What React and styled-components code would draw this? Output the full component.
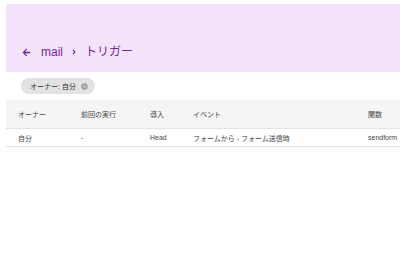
import React from 'react'
import styled, { createGlobalStyle } from 'styled-components'

const GlobalStyle = createGlobalStyle`
  body {
    margin: 0;
    background: #ffffff;
    font-family: "Liberation Sans", "Noto Sans CJK JP", sans-serif;
    overflow: hidden;
  }
`

const StyledPage = styled.div`
  width: 394px;
  padding: 4px 0 0 6px;
  overflow: hidden;
`

const StyledHeader = styled.header`
  height: 68px;
  background-color: #f3e4fc;
  display: flex;
  align-items: flex-end;
  padding: 0 0 13px 15px;
  box-sizing: border-box;
`

const StyledCrumbs = styled.nav`
  display: flex;
  align-items: center;
  gap: 7px;
  color: #7b1fa2;
  font-size: 12px;
  line-height: 14px;
`

const StyledIconButton = styled.span`
  display: flex;
  align-items: center;
  color: #6a1b9a;
  margin-right: ${p => (p.$wide ? '2px' : '0')};
`

const StyledCrumb = styled.span`
  color: #7b1fa2;
`

const StyledChip = styled.span`
  display: inline-flex;
  align-items: center;
  gap: 5px;
  margin: 6px 0 6px 15px;
  height: 16px;
  padding: 0 7px 0 9px;
  border-radius: 8px;
  background-color: #e2e2e2;
  color: #333;
  font-size: 7px;
`

const StyledTable = styled.div`
  width: 460px;
`

const StyledRow = styled.div`
  display: grid;
  grid-template-columns: 63px 69px 43px 175px 1fr;
  align-items: center;
  padding-left: 12px;
  height: ${p => (p.$head ? '28px' : '17px')};
  background-color: ${p => (p.$head ? '#f5f5f5' : '#ffffff')};
  border-bottom: 1px solid #e4e4e4;
  color: #444;
  font-size: 7px;
  white-space: nowrap;
`

const Arrow = () => (
  <svg width="11" height="11" viewBox="0 0 24 24" fill="currentColor">
    <path d="M20 10.5H8.4l5-5L11.6 3.7 3.3 12l8.3 8.3 1.8-1.8-5-5H20v-3z" />
  </svg>
)

const Chevron = () => (
  <svg width="8" height="10" viewBox="0 0 24 24" fill="currentColor">
    <path d="M7.6 17L12.6 12 7.6 7l2.2-2.2L17 12l-7.2 7.2z" />
  </svg>
)

const Cancel = () => (
  <svg width="7" height="7" viewBox="0 0 24 24">
    <circle cx="12" cy="12" r="11" fill="#9e9e9e" />
    <path d="M8 8l8 8M16 8l-8 8" stroke="#e2e2e2" strokeWidth="3" />
  </svg>
)

const App = () => {
  return (
    <StyledPage>
      <GlobalStyle />
      <StyledHeader>
        <StyledCrumbs>
          <StyledIconButton $wide><Arrow /></StyledIconButton>
          <StyledCrumb>{'mail'}</StyledCrumb>
          <StyledIconButton><Chevron /></StyledIconButton>
          <StyledCrumb>{'トリガー'}</StyledCrumb>
        </StyledCrumbs>
      </StyledHeader>
      <StyledChip>
        {'オーナー: 自分'}
        <Cancel />
      </StyledChip>
      <StyledTable>
        <StyledRow $head>
          <span>{'オーナー'}</span>
          <span>{'前回の実行'}</span>
          <span>{'導入'}</span>
          <span>{'イベント'}</span>
          <span>{'関数'}</span>
        </StyledRow>
        <StyledRow>
          <span>{'自分'}</span>
          <span>{'-'}</span>
          <span>{'Head'}</span>
          <span>{'フォームから - フォーム送信時'}</span>
          <span>{'sendform'}</span>
        </StyledRow>
      </StyledTable>
    </StyledPage>
  )
}

export default App
